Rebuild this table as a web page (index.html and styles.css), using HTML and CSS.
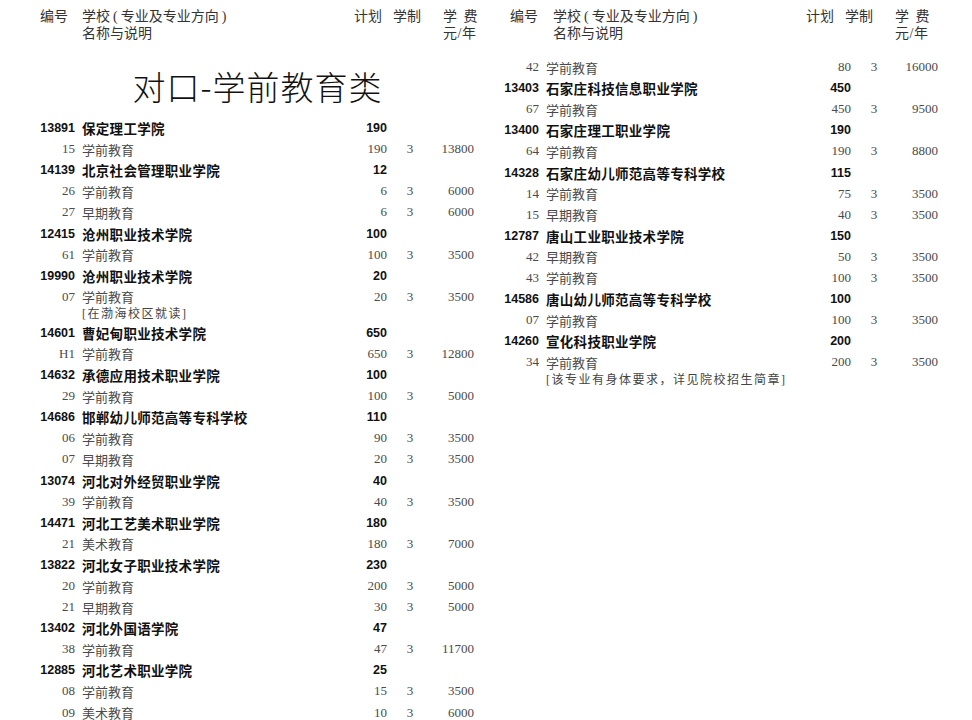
FILE: index.html
```html
<!DOCTYPE html>
<html lang="zh-CN">
<head>
<meta charset="utf-8">
<title>对口-学前教育类</title>
<link rel="stylesheet" href="styles.css">
</head>
<body>
<div class="page">
  <section class="col">
    <div class="hdr hdr-left">
      <div>编号</div>
      <div>学校<span class="paren">(</span>专业及专业方向<span class="paren">)</span><br>名称与说明</div>
      <div>计划</div>
      <div>学制</div>
      <div class="fee-h"><span class="fee-l1">学 费</span><span class="fee-l2">元/年</span></div>
    </div>
    <h1 class="title">对口-学前教育类</h1>
    <div class="list">
      <div class="row school"><span class="code">13891</span><span class="name">保定理工学院</span><span class="plan">190</span><span></span><span></span></div>
      <div class="row major"><span class="code">15</span><span class="name">学前教育</span><span class="plan">190</span><span class="yrs">3</span><span class="fee">13800</span></div>
      <div class="row school"><span class="code">14139</span><span class="name">北京社会管理职业学院</span><span class="plan">12</span><span></span><span></span></div>
      <div class="row major"><span class="code">26</span><span class="name">学前教育</span><span class="plan">6</span><span class="yrs">3</span><span class="fee">6000</span></div>
      <div class="row major"><span class="code">27</span><span class="name">早期教育</span><span class="plan">6</span><span class="yrs">3</span><span class="fee">6000</span></div>
      <div class="row school"><span class="code">12415</span><span class="name">沧州职业技术学院</span><span class="plan">100</span><span></span><span></span></div>
      <div class="row major"><span class="code">61</span><span class="name">学前教育</span><span class="plan">100</span><span class="yrs">3</span><span class="fee">3500</span></div>
      <div class="row school"><span class="code">19990</span><span class="name">沧州职业技术学院</span><span class="plan">20</span><span></span><span></span></div>
      <div class="row major"><span class="code">07</span><span class="name">学前教育</span><span class="plan">20</span><span class="yrs">3</span><span class="fee">3500</span></div>
      <div class="note">[在渤海校区就读]</div>
      <div class="row school"><span class="code">14601</span><span class="name">曹妃甸职业技术学院</span><span class="plan">650</span><span></span><span></span></div>
      <div class="row major"><span class="code">H1</span><span class="name">学前教育</span><span class="plan">650</span><span class="yrs">3</span><span class="fee">12800</span></div>
      <div class="row school"><span class="code">14632</span><span class="name">承德应用技术职业学院</span><span class="plan">100</span><span></span><span></span></div>
      <div class="row major"><span class="code">29</span><span class="name">学前教育</span><span class="plan">100</span><span class="yrs">3</span><span class="fee">5000</span></div>
      <div class="row school"><span class="code">14686</span><span class="name">邯郸幼儿师范高等专科学校</span><span class="plan">110</span><span></span><span></span></div>
      <div class="row major"><span class="code">06</span><span class="name">学前教育</span><span class="plan">90</span><span class="yrs">3</span><span class="fee">3500</span></div>
      <div class="row major"><span class="code">07</span><span class="name">早期教育</span><span class="plan">20</span><span class="yrs">3</span><span class="fee">3500</span></div>
      <div class="row school"><span class="code">13074</span><span class="name">河北对外经贸职业学院</span><span class="plan">40</span><span></span><span></span></div>
      <div class="row major"><span class="code">39</span><span class="name">学前教育</span><span class="plan">40</span><span class="yrs">3</span><span class="fee">3500</span></div>
      <div class="row school"><span class="code">14471</span><span class="name">河北工艺美术职业学院</span><span class="plan">180</span><span></span><span></span></div>
      <div class="row major"><span class="code">21</span><span class="name">美术教育</span><span class="plan">180</span><span class="yrs">3</span><span class="fee">7000</span></div>
      <div class="row school"><span class="code">13822</span><span class="name">河北女子职业技术学院</span><span class="plan">230</span><span></span><span></span></div>
      <div class="row major"><span class="code">20</span><span class="name">学前教育</span><span class="plan">200</span><span class="yrs">3</span><span class="fee">5000</span></div>
      <div class="row major"><span class="code">21</span><span class="name">早期教育</span><span class="plan">30</span><span class="yrs">3</span><span class="fee">5000</span></div>
      <div class="row school"><span class="code">13402</span><span class="name">河北外国语学院</span><span class="plan">47</span><span></span><span></span></div>
      <div class="row major"><span class="code">38</span><span class="name">学前教育</span><span class="plan">47</span><span class="yrs">3</span><span class="fee">11700</span></div>
      <div class="row school"><span class="code">12885</span><span class="name">河北艺术职业学院</span><span class="plan">25</span><span></span><span></span></div>
      <div class="row major"><span class="code">08</span><span class="name">学前教育</span><span class="plan">15</span><span class="yrs">3</span><span class="fee">3500</span></div>
      <div class="row major"><span class="code">09</span><span class="name">美术教育</span><span class="plan">10</span><span class="yrs">3</span><span class="fee">6000</span></div>
    </div>
  </section>
  <section class="col">
    <div class="hdr hdr-right">
      <div>编号</div>
      <div>学校<span class="paren">(</span>专业及专业方向<span class="paren">)</span><br>名称与说明</div>
      <div>计划</div>
      <div>学制</div>
      <div class="fee-h"><span class="fee-l1">学 费</span><span class="fee-l2">元/年</span></div>
    </div>
    <div class="list list-right">
      <div class="row major"><span class="code">42</span><span class="name">学前教育</span><span class="plan">80</span><span class="yrs">3</span><span class="fee">16000</span></div>
      <div class="row school"><span class="code">13403</span><span class="name">石家庄科技信息职业学院</span><span class="plan">450</span><span></span><span></span></div>
      <div class="row major"><span class="code">67</span><span class="name">学前教育</span><span class="plan">450</span><span class="yrs">3</span><span class="fee">9500</span></div>
      <div class="row school"><span class="code">13400</span><span class="name">石家庄理工职业学院</span><span class="plan">190</span><span></span><span></span></div>
      <div class="row major"><span class="code">64</span><span class="name">学前教育</span><span class="plan">190</span><span class="yrs">3</span><span class="fee">8800</span></div>
      <div class="row school"><span class="code">14328</span><span class="name">石家庄幼儿师范高等专科学校</span><span class="plan">115</span><span></span><span></span></div>
      <div class="row major"><span class="code">14</span><span class="name">学前教育</span><span class="plan">75</span><span class="yrs">3</span><span class="fee">3500</span></div>
      <div class="row major"><span class="code">15</span><span class="name">早期教育</span><span class="plan">40</span><span class="yrs">3</span><span class="fee">3500</span></div>
      <div class="row school"><span class="code">12787</span><span class="name">唐山工业职业技术学院</span><span class="plan">150</span><span></span><span></span></div>
      <div class="row major"><span class="code">42</span><span class="name">早期教育</span><span class="plan">50</span><span class="yrs">3</span><span class="fee">3500</span></div>
      <div class="row major"><span class="code">43</span><span class="name">学前教育</span><span class="plan">100</span><span class="yrs">3</span><span class="fee">3500</span></div>
      <div class="row school"><span class="code">14586</span><span class="name">唐山幼儿师范高等专科学校</span><span class="plan">100</span><span></span><span></span></div>
      <div class="row major"><span class="code">07</span><span class="name">学前教育</span><span class="plan">100</span><span class="yrs">3</span><span class="fee">3500</span></div>
      <div class="row school"><span class="code">14260</span><span class="name">宣化科技职业学院</span><span class="plan">200</span><span></span><span></span></div>
      <div class="row major"><span class="code">34</span><span class="name">学前教育</span><span class="plan">200</span><span class="yrs">3</span><span class="fee">3500</span></div>
      <div class="note">[该专业有身体要求，详见院校招生简章]</div>
    </div>
  </section>
</div>
</body>
</html>
```
FILE: styles.css
```css
html, body {
  margin: 0;
  padding: 0;
  background: #ffffff;
}

body {
  font-family: "Noto Sans CJK SC", sans-serif;
  color: #222;
}

.page {
  display: flex;
  padding-left: 30px;
}

.col {
  flex: none;
  width: 464px;
}

/* header */
.hdr {
  display: grid;
  grid-template-columns: var(--c1) var(--c2) 39px 50px 40px;
  padding-top: 8px;
  padding-left: var(--pad);
  font-family: "Liberation Serif", "Noto Sans CJK SC", serif;
  font-size: 14px;
  line-height: 17px;
  color: #333;
  white-space: nowrap;
}

.hdr-left {
  --pad: 10px;
  --c1: 42px;
  --c2: 272px;
}

.hdr-right {
  --pad: 16px;
  --c1: 43px;
  --c2: 253px;
}

.paren {
  margin: 0 3px;
}

.fee-h {
  display: flex;
  flex-direction: column;
}

.fee-l1 {
  word-spacing: 3px;
}

.fee-l2 {
  letter-spacing: 0.5px;
}

/* title */
.title {
  margin: 24px 0 11.5px;
  padding-right: 9px;
  height: 40px;
  line-height: 40px;
  text-align: center;
  font-size: 33px;
  font-weight: 300;
  letter-spacing: 1px;
  color: #111;
}

.list-right {
  margin-top: 14.5px;
}

/* rows */
.row {
  display: grid;
  grid-template-columns: 45px 272px 40px 46px 41px;
  align-items: center;
  height: 21.1px;
  white-space: nowrap;
}

.code {
  text-align: right;
}

.name {
  padding-left: 7px;
}

.plan {
  text-align: right;
}

.yrs {
  text-align: center;
}

.fee {
  text-align: right;
}

.school {
  font-family: "Liberation Sans", "Noto Sans CJK SC", sans-serif;
  font-weight: 700;
  color: #111;
}

.school .code,
.school .plan {
  font-size: 12.5px;
}

.school .name {
  font-size: 13.5px;
  letter-spacing: 0.3px;
}

.major {
  font-family: "Liberation Serif", "Noto Sans CJK SC", serif;
  font-size: 13px;
  color: #4a4a4a;
}

.note {
  height: 15px;
  line-height: 15px;
  padding-left: 52px;
  font-family: "Liberation Serif", "Noto Sans CJK SC", serif;
  font-size: 12px;
  letter-spacing: 1.5px;
  color: #444;
  white-space: nowrap;
}
```
